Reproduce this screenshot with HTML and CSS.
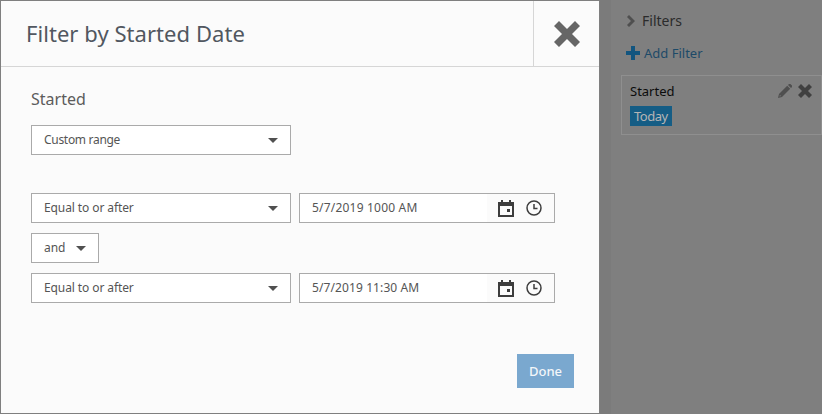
FILE: index.html
```html
<!DOCTYPE html>
<html lang="en">
<head>
<meta charset="utf-8">
<title>Filter by Started Date</title>
<link rel="stylesheet" href="styles.css">
</head>
<body>
<aside class="sidebar">
  <div class="filters-head">
    <svg class="chev" viewBox="0 0 9 12"><path d="M0 2 2 0 8 6 2 12 0 10 4 6z"/></svg>
    <span>Filters</span>
  </div>
  <div class="add-filter">
    <svg class="plus" viewBox="0 0 14 14"><path d="M5 0h4v5h5v4H9v5H5V9H0V5h5z"/></svg>
    <span>Add Filter</span>
  </div>
  <div class="card">
    <div class="card-top">
      <span>Started</span>
      <span class="card-icons">
        <svg class="pencil" viewBox="0 0 14 14"><path fill-rule="evenodd" d="M0 14 1 10 9.200 1.800 12.200 4.800 4 13zM1.900 10.900 1.500 12.500 3.100 12.100zM10 1 11 0a1 1 0 0 1 1.400 0L14 1.600A1 1 0 0 1 14 3L13 4z"/></svg>
        <svg class="x-small" viewBox="0 0 14 14"><path d="M3 0 7 4 11 0 14 3 10 7 14 11 11 14 7 10 3 14 0 11 4 7 0 3z"/></svg>
      </span>
    </div>
    <span class="tag">Today</span>
  </div>
</aside>

<section class="modal">
  <header class="modal-head">
    <h1>Filter by Started Date</h1>
    <div class="close">
      <svg class="x-large" viewBox="0 0 26 26"><path d="M5 0 13 8 21 0 26 5 18 13 26 21 21 26 13 18 5 26 0 21 8 13 0 5z"/></svg>
    </div>
  </header>
  <div class="modal-body">
    <h2>Started</h2>
    <div class="select wide range"><span class="range-text">Custom range</span><i class="caret"></i></div>
    <div class="row first">
      <div class="select wide"><span>Equal to or after</span><i class="caret"></i></div>
      <div class="date">
        <span class="date-text">5/7/2019 1000 AM</span>
        <span class="date-icons">
          <svg class="cal" viewBox="0 0 16 17"><path fill-rule="evenodd" d="M3 0h2v2h6V0h2v2h3v15H0V2h3zM2 6v9h12V6zm7 3h3v3H9z"/></svg>
          <svg class="clock" viewBox="0 0 16 16"><circle cx="8" cy="8" r="7" fill="none" stroke-width="1.500"/><path fill="none" stroke-width="1.500" d="M8 4v4.500h3.500"/></svg>
        </span>
      </div>
    </div>
    <div class="select small"><span>and</span><i class="caret"></i></div>
    <div class="row">
      <div class="select wide"><span>Equal to or after</span><i class="caret"></i></div>
      <div class="date">
        <span class="date-text tight">5/7/2019 11:30 AM</span>
        <span class="date-icons">
          <svg class="cal" viewBox="0 0 16 17"><path fill-rule="evenodd" d="M3 0h2v2h6V0h2v2h3v15H0V2h3zM2 6v9h12V6zm7 3h3v3H9z"/></svg>
          <svg class="clock" viewBox="0 0 16 16"><circle cx="8" cy="8" r="7" fill="none" stroke-width="1.500"/><path fill="none" stroke-width="1.500" d="M8 4v4.500h3.500"/></svg>
        </span>
      </div>
    </div>
    <div class="actions"><button class="done" type="button">Done</button></div>
  </div>
</section>
</body>
</html>
```
FILE: styles.css
```css
* { box-sizing: border-box; }
html, body { height: 100%; }
body {
  margin: 0;
  width: 822px;
  height: 414px;
  overflow: hidden;
  background: #7f7f7f;
  font-family: "Noto Sans", sans-serif;
  color: #4c4c4c;
  font-size: 13px;
  position: relative;
}
.sidebar {
  margin-left: 600px;
  height: 100%;
  padding: 11px 0 0 10px;
  border-left: 11px solid #7b7b7b;
  color: #2b2b2b;
}
.filters-head {
  display: flex;
  align-items: center;
  height: 18px;
  padding-left: 6px;
  gap: 6px;
  font-size: 14px;
}
.chev { width: 9px; height: 12px; fill: #4f4f4f; margin-top: 1px; }
.add-filter {
  display: flex;
  align-items: center;
  height: 18px;
  margin-top: 15px;
  padding-left: 5px;
  gap: 4px;
  color: #1d4a68;
  font-size: 13px;
}
.plus { width: 14px; height: 14px; fill: #12557f; }
.card {
  margin-top: 13px;
  width: 201px;
  height: 60px;
  border: 1px solid #8f8f8f;
  padding: 5px 8px;
  color: #0c0c0c;
}
.card-top {
  display: flex;
  justify-content: space-between;
  align-items: center;
  height: 19px;
  font-size: 13px;
}
.card-icons { display: flex; align-items: center; gap: 6px; padding-right: 1px; }
.pencil { width: 14px; height: 14px; fill: #4f4f4f; }
.x-small { width: 14px; height: 14px; fill: #404040; }
.tag {
  display: inline-block;
  margin-top: 6px;
  height: 20px;
  line-height: 20px;
  padding: 0 4px;
  background: #155d85;
  color: #b5b5b5;
  font-size: 13px;
  letter-spacing: -.5px;
}
.modal {
  position: absolute;
  left: 1px;
  top: 1px;
  width: 598px;
  height: 412px;
  background: #fbfbfb;
}
.modal-head {
  display: flex;
  justify-content: space-between;
  height: 66px;
  border-bottom: 1px solid #d6d6d6;
}
h1 {
  margin: 0;
  padding: 0 0 0 25px;
  font-size: 22px;
  font-weight: 400;
  line-height: 65px;
  color: #515760;
  letter-spacing: .05px;
}
.close {
  width: 66px;
  border-left: 1px solid #d6d6d6;
  display: flex;
  align-items: center;
  justify-content: center;
}
.x-large { width: 26px; height: 26px; fill: #666; }
.modal-body { padding: 22px 30px 0; }
h2 {
  margin: 0;
  font-size: 16px;
  font-weight: 400;
  line-height: 20px;
  color: #5c5c5c;
}
.select {
  height: 30px;
  background: #fff;
  border: 1px solid #aaa;
  display: flex;
  align-items: center;
  justify-content: space-between;
  padding: 0 12px 2px;
  font-size: 12px;
  color: #555;
  letter-spacing: -.1px;
}
.range-text { letter-spacing: -.3px; }
.wide { width: 260px; }
.range { margin-top: 16px; }
.small { width: 68px; margin: 10px 0; }
.caret {
  width: 0;
  height: 0;
  border-left: 5px solid transparent;
  border-right: 5px solid transparent;
  border-top: 5px solid #505050;
  margin-top: 2px;
}
.row { display: flex; gap: 8px; }
.first { margin-top: 38px; }
.date {
  width: 256px;
  height: 30px;
  border: 1px solid #aaa;
  display: flex;
  font-size: 12px;
  color: #555;
}
.date-text {
  flex: 1;
  background: #fff;
  padding-left: 12px;
  line-height: 28px;
  letter-spacing: .2px;
}
.tight { letter-spacing: .1px; }
.date-icons {
  width: 67px;
  display: flex;
  align-items: center;
  padding-left: 11px;
  gap: 12px;
}
.cal { width: 16px; height: 17px; fill: #3d3d3d; }
.clock { width: 16px; height: 16px; stroke: #3d3d3d; }
.actions { display: flex; justify-content: flex-end; margin-top: 51px; margin-right: -5px; }
.done {
  width: 57px;
  height: 34px;
  border: 0;
  background: #7aa8cf;
  color: #f3f6f9;
  font: 500 13px "Noto Sans", sans-serif;
  padding: 0;
}
```
